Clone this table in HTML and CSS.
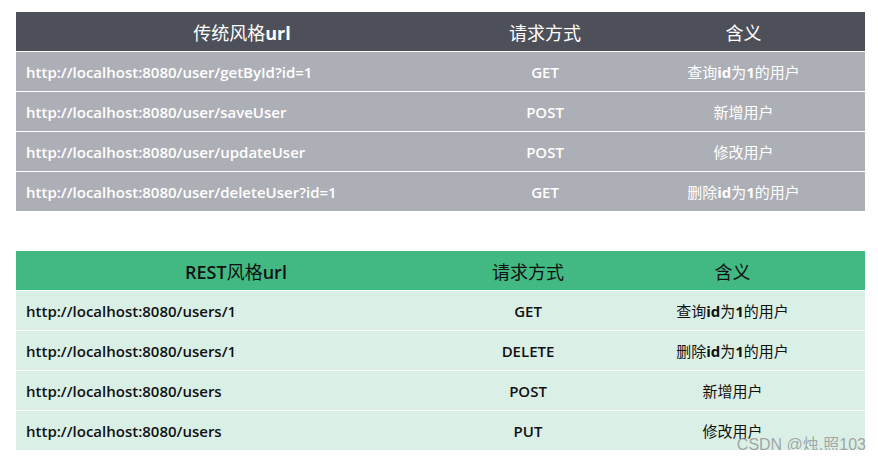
FILE: index.html
```html
<!DOCTYPE html>
<html lang="zh">
<head>
<meta charset="utf-8">
<link rel="stylesheet" href="styles.css">
</head>
<body>
<div class="page">
  <table class="tbl tbl-old">
    <colgroup><col class="c1"><col class="c2"><col class="c3"></colgroup>
    <thead>
      <tr><th>传统风格<b>url</b></th><th>请求方式</th><th>含义</th></tr>
    </thead>
    <tbody>
      <tr><td class="url">http://localhost:8080/user/getById?id=1</td><td class="m">GET</td><td class="d">查询<b>id</b>为<b>1</b>的用户</td></tr>
      <tr><td class="url">http://localhost:8080/user/saveUser</td><td class="m">POST</td><td class="d">新增用户</td></tr>
      <tr><td class="url">http://localhost:8080/user/updateUser</td><td class="m">POST</td><td class="d">修改用户</td></tr>
      <tr><td class="url">http://localhost:8080/user/deleteUser?id=1</td><td class="m">GET</td><td class="d">删除<b>id</b>为<b>1</b>的用户</td></tr>
    </tbody>
  </table>

  <table class="tbl tbl-rest">
    <colgroup><col class="c1"><col class="c2"><col class="c3"></colgroup>
    <thead>
      <tr><th><span class="lat">REST</span>风格<span class="lat">url</span></th><th>请求方式</th><th>含义</th></tr>
    </thead>
    <tbody>
      <tr><td class="url">http://localhost:8080/users/1</td><td class="m">GET</td><td class="d">查询<b>id</b>为<b>1</b>的用户</td></tr>
      <tr><td class="url">http://localhost:8080/users/1</td><td class="m">DELETE</td><td class="d">删除<b>id</b>为<b>1</b>的用户</td></tr>
      <tr><td class="url">http://localhost:8080/users</td><td class="m">POST</td><td class="d">新增用户</td></tr>
      <tr><td class="url">http://localhost:8080/users</td><td class="m">PUT</td><td class="d">修改用户</td></tr>
    </tbody>
  </table>
  <div class="wm">CSDN @烛.照103</div>
</div>
</body>
</html>
```
FILE: styles.css
```css
html, body { margin: 0; padding: 0; background: #fff; }
.page {
  position: relative;
  padding: 12px 13px 0 16px;
  display: flex;
  flex-direction: column;
  gap: 40px;
  font-family: "Open Sans", "Noto Sans CJK SC", sans-serif;
}
.tbl {
  width: 849px;
  border-collapse: collapse;
  table-layout: fixed;
}
.tbl-old .c1 { width: 452px; }
.tbl-old .c2 { width: 154px; }
.tbl-old .c3 { width: 243px; }
.tbl-rest .c1 { width: 440px; }
.tbl-rest .c2 { width: 144px; }
.tbl-rest .c3 { width: 265px; }
.tbl th, .tbl td {
  height: 39px;
  padding: 0;
  border-bottom: 1px solid #fff;
  white-space: nowrap;
}
.tbl tbody tr:last-child td { border-bottom: 0; }
.tbl th {
  font-family: "Noto Sans CJK SC", sans-serif;
  font-weight: 400;
  font-size: 18px;
  text-align: center;
}
.tbl th b, .tbl th .lat { font-family: "Open Sans", sans-serif; }
.tbl td.url {
  padding-left: 10px;
  font-size: 15px;
  font-weight: 600;
  text-align: left;
}
.tbl td.m {
  font-size: 15px;
  font-weight: 600;
  text-align: center;
}
.tbl td.d {
  font-family: "Noto Sans CJK SC", sans-serif;
  font-size: 15px;
  text-align: center;
}
.tbl td.d b { font-family: "Open Sans", sans-serif; font-weight: 700; }

.tbl-old th { background: #4d5059; color: #fff; }
.tbl-old td { background: #adafb6; color: #fff; }
.tbl-rest th { background: #42b983; color: #111; }
.tbl-rest th .lat { font-weight: 600; }
.tbl-rest td { background: #daf0e6; color: #111; }

.wm {
  position: absolute;
  right: 12px;
  top: 431px;
  font-family: "Liberation Sans", "Noto Sans CJK SC", sans-serif;
  font-size: 16px;
  color: rgba(150, 150, 150, 0.85);
}
```
